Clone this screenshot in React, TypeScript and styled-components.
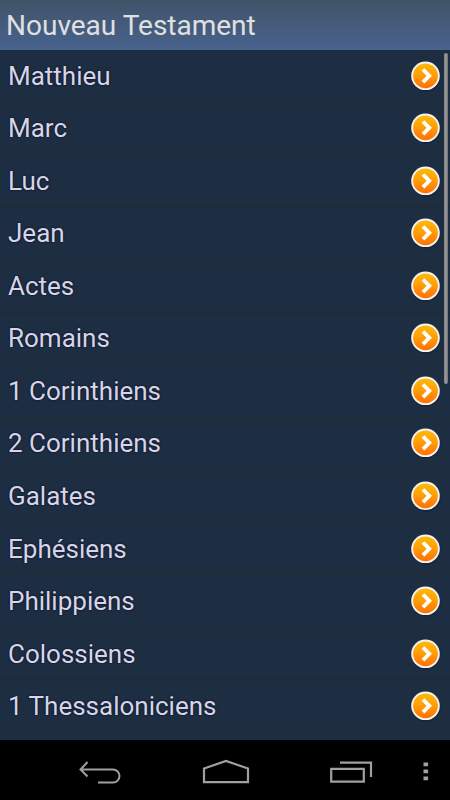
import React, { useId } from "react";
import styled, { createGlobalStyle } from "styled-components";

const GlobalStyle = createGlobalStyle`
  *, *::before, *::after { box-sizing: border-box; }
  body {
    margin: 0;
    background: #1d2d42;
    font-family: Roboto, "Noto Sans", sans-serif;
  }
`;

const Screen = styled.div`
  display: flex;
  flex-direction: column;
  min-height: 100vh;
  background: #1d2d42;
`;

const Header = styled.header`
  display: flex;
  align-items: center;
  height: 50px;
  padding: 2px 6px 0;
  background: linear-gradient(#405468, #48628f);
`;

const Title = styled.h1`
  margin: 0;
  font-size: 28px;
  line-height: 32px;
  font-weight: 400;
  color: #e0e0e0;
`;

const Main = styled.main`
  position: relative;
  display: flex;
  flex: 1;
`;

const BookList = styled.ul`
  display: flex;
  flex: 1;
  flex-direction: column;
  margin: 0;
  padding: 0 0 7px;
  list-style: none;
`;

const BookItem = styled.li`
  display: flex;
  flex: 1;
  min-height: 48px;
  border-bottom: 1px solid #25292d;
`;

const BookButton = styled.button`
  display: flex;
  flex: 1;
  align-items: center;
  justify-content: space-between;
  padding: 0 8px;
  border: 0;
  background: none;
  color: #d6d6e8;
  font: inherit;
  font-size: 26px;
  line-height: 32px;
  text-align: left;
  text-shadow: 0 0 2px #000018;
  cursor: pointer;
`;

const ScrollThumb = styled.div`
  position: absolute;
  top: 3px;
  right: 2px;
  width: 4px;
  height: 48%;
  border-radius: 2px;
  background: linear-gradient(to right, #858585, #989898 50%, #707070);
`;

const NavBar = styled.nav`
  display: flex;
  height: 60px;
  padding: 0 12px 0 37px;
  background: #000;
`;

const NavButton = styled.button<{ $compact?: boolean }>`
  display: flex;
  flex: ${({ $compact }) => ($compact ? "0 0 24px" : "1")};
  align-items: center;
  justify-content: center;
  padding: 4px 0 0;
  border: 0;
  background: none;
  color: #a0a0a0;
  cursor: pointer;
`;

const books = [
  "Matthieu",
  "Marc",
  "Luc",
  "Jean",
  "Actes",
  "Romains",
  "1 Corinthiens",
  "2 Corinthiens",
  "Galates",
  "Ephésiens",
  "Philippiens",
  "Colossiens",
  "1 Thessaloniciens",
];

function ArrowDisc() {
  const fillId = useId();
  return (
    <svg width="34" height="34" viewBox="0 0 34 34" aria-hidden="true">
      <defs>
        <linearGradient id={fillId} x1="0" y1="0" x2="0" y2="1">
          <stop offset="0" stopColor="#ffb908" />
          <stop offset="0.45" stopColor="#ffa008" />
          <stop offset="1" stopColor="#ff7005" />
        </linearGradient>
      </defs>
      <circle cx="18" cy="18" r="14.5" fill="#07101c" opacity="0.35" />
      <circle cx="17.5" cy="16.8" r="14.3" fill="#f6f4f2" />
      <circle cx="17.5" cy="16.8" r="12.4" fill={`url(#${fillId})`} />
      <path d="M15 10.5 21.3 16.800 15 23.100" fill="none" stroke="#fff" strokeWidth="3.8" />
    </svg>
  );
}

function BackIcon() {
  return (
    <svg width="44" height="26" viewBox="0 0 44 26" fill="none" stroke="currentColor" strokeWidth="2" aria-hidden="true">
      <path d="M9.500 3 2.500 10.500l7 7M3 10.500h32a6.500 6.500 0 0 1 0 13H20" />
    </svg>
  );
}

function HomeIcon() {
  return (
    <svg width="48" height="26" viewBox="0 0 48 26" fill="none" stroke="currentColor" strokeWidth="2.2" aria-hidden="true">
      <path d="M2 9.500 24 2l22 7.500v13.700H2z" />
    </svg>
  );
}

function RecentsIcon() {
  return (
    <svg width="44" height="26" viewBox="0 0 44 26" fill="none" stroke="currentColor" strokeWidth="2.2" aria-hidden="true">
      <path d="M2.200 9.800h32.600v12.900H2.200zM11 3.700h31V18" />
    </svg>
  );
}

function MenuIcon() {
  return (
    <svg width="6" height="22" viewBox="0 0 6 22" fill="currentColor" aria-hidden="true">
      <path d="M.5 1.500h4.600v3.800H.5zM.5 8.500h4.600v3.800H.5zM.5 15.500h4.600v3.800H.5z" />
    </svg>
  );
}

export default function App() {
  return (
    <Screen>
      <GlobalStyle />
      <Header>
        <Title>Nouveau Testament</Title>
      </Header>
      <Main>
        <BookList>
          {books.map((book) => (
            <BookItem key={book}>
              <BookButton type="button">
                {book}
                <ArrowDisc />
              </BookButton>
            </BookItem>
          ))}
        </BookList>
        <ScrollThumb />
      </Main>
      <NavBar aria-label="Navigation">
        <NavButton type="button" aria-label="Retour">
          <BackIcon />
        </NavButton>
        <NavButton type="button" aria-label="Accueil">
          <HomeIcon />
        </NavButton>
        <NavButton type="button" aria-label="Applications récentes">
          <RecentsIcon />
        </NavButton>
        <NavButton type="button" aria-label="Menu" $compact>
          <MenuIcon />
        </NavButton>
      </NavBar>
    </Screen>
  );
}
